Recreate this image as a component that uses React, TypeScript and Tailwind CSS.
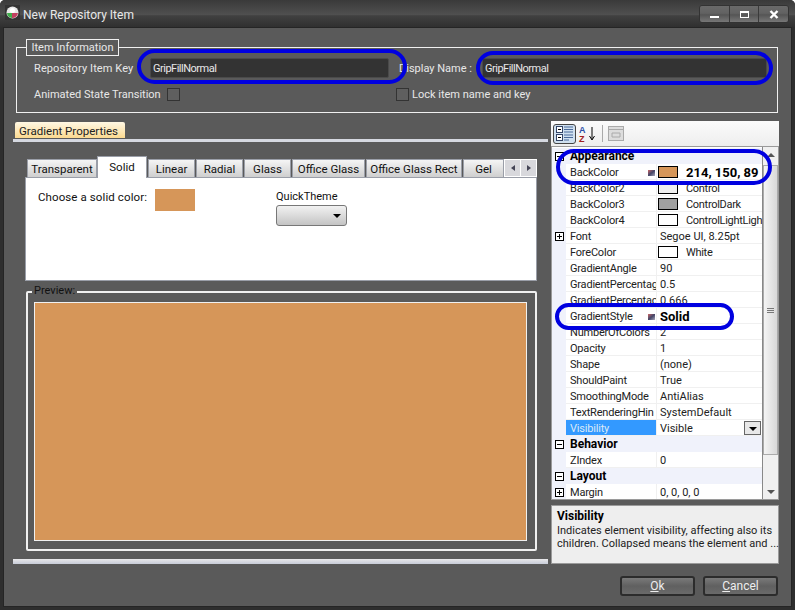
const font = "font-['Roboto','Liberation_Sans',sans-serif]";

type Row = {
  name: string;
  value?: string;
  swatch?: string;
  cat?: boolean;
  plus?: boolean;
  bold?: boolean;
  icon?: boolean;
};

const rows: Row[] = [
  { name: 'Appearance', cat: true },
  { name: 'BackColor', value: '214, 150, 89', swatch: 'bg-[#d69659]', bold: true, icon: true },
  { name: 'BackColor2', value: 'Control', swatch: 'bg-[#f0f0f0]' },
  { name: 'BackColor3', value: 'ControlDark', swatch: 'bg-[#a0a0a0]' },
  { name: 'BackColor4', value: 'ControlLightLigh', swatch: 'bg-white' },
  { name: 'Font', value: 'Segoe UI, 8.25pt', plus: true },
  { name: 'ForeColor', value: 'White', swatch: 'bg-white' },
  { name: 'GradientAngle', value: '90' },
  { name: 'GradientPercentag', value: '0.5' },
  { name: 'GradientPercentac', value: '0.666' },
  { name: 'GradientStyle', value: 'Solid', bold: true, icon: true },
  { name: 'NumberOfColors', value: '2' },
  { name: 'Opacity', value: '1' },
  { name: 'Shape', value: '(none)' },
  { name: 'ShouldPaint', value: 'True' },
  { name: 'SmoothingMode', value: 'AntiAlias' },
  { name: 'TextRenderingHin', value: 'SystemDefault' },
  { name: 'Visibility', value: 'Visible' },
  { name: 'Behavior', cat: true },
  { name: 'ZIndex', value: '0' },
  { name: 'Layout', cat: true },
  { name: 'Margin', value: '0, 0, 0, 0', plus: true },
];

const tabs = [
  { label: 'Transparent', w: 'w-[70px]' },
  { label: 'Solid', w: 'w-[50px]', active: true },
  { label: 'Linear', w: 'w-[47px]' },
  { label: 'Radial', w: 'w-[47px]' },
  { label: 'Glass', w: 'w-[47px]' },
  { label: 'Office Glass', w: 'w-[73px]' },
  { label: 'Office Glass Rect', w: 'w-[96px]' },
  { label: 'Gel', w: 'w-[41px]' },
];

function Expander({ plus }: { plus?: boolean }) {
  return (
    <span className="relative block h-[9px] w-[9px] border border-black bg-white">
      <span className="absolute left-[1px] top-[3px] h-[1px] w-[5px] bg-black" />
      {plus && <span className="absolute left-[3px] top-[1px] h-[5px] w-[1px] bg-black" />}
    </span>
  );
}

function GridRow({ row }: { row: Row }) {
  if (row.cat) {
    return (
      <div className="flex h-[16px] items-center bg-[#f0f2fb]">
        <div className="flex w-[14px] justify-center">
          <Expander />
        </div>
        <span className="pl-[4px] text-[12px] font-bold text-black">{row.name}</span>
      </div>
    );
  }
  const selected = row.name === 'Visibility';
  return (
    <div className="flex h-[16px] bg-white">
      <div className="flex w-[14px] items-center justify-center bg-[#f0f2fb]">
        {row.plus && <Expander plus />}
      </div>
      <div
        className={`flex w-[90px] items-center overflow-hidden whitespace-nowrap border-b border-[#f0f0f0] pl-[4px] pt-[2px] ${
          selected ? 'bg-[#3399ff] text-[#dbe9f7]' : 'text-[#222]'
        }`}
      >
        <span className="flex-1 overflow-hidden tracking-[-0.2px]">{row.name}</span>
        {row.icon && (
          <span className="mr-[1px] h-[6px] w-[7px] bg-gradient-to-br from-[#c66] via-[#446] to-[#aab]" />
        )}
      </div>
      <div className="relative flex w-[106px] items-center overflow-hidden whitespace-nowrap border-b border-l border-[#f0f0f0] pl-[3px] pt-[2px] text-[#222]">
        {row.swatch && (
          <span className={`-ml-[2px] -mt-[1px] mr-[8px] h-[12px] w-[20px] shrink-0 border border-black ${row.swatch}`} />
        )}
        <span className={row.bold ? 'text-[13px] font-bold text-black' : row.swatch ? 'tracking-[-0.3px]' : ''}>{row.value}</span>
        {selected && (
          <span className="absolute right-[1px] top-[1px] flex h-[14px] w-[17px] items-center justify-center border border-[#666] bg-[#e8e8e8]">
            <span className="mt-[2px] border-x-[4px] border-t-[4px] border-x-transparent border-t-black" />
          </span>
        )}
      </div>
    </div>
  );
}

function Field({ w, value }: { w: string; value: string }) {
  return (
    <div className={`flex h-[20px] items-center rounded-[2px] border border-[#4a4a4a] bg-[#333] pl-[2px] pt-[2px] tracking-[-0.5px] text-[#e8e8e8] ${w}`}>
      {value}
    </div>
  );
}

function WinButton({ children, w }: { children: React.ReactNode; w: string }) {
  return (
    <div className={`flex h-full items-center justify-center border-r border-[#3a3a3a] bg-[linear-gradient(#6a6a6a_0%,#626262_45%,#555_55%,#777_100%)] last:border-r-0 ${w}`}>
      {children}
    </div>
  );
}

function Button({ first, rest }: { first: string; rest: string }) {
  return (
    <div className="flex h-[20px] w-[75px] items-center justify-center rounded-[3px] border-2 border-[#2c2c2c] bg-gradient-to-b from-[#7a7a7a] via-[#606060] to-[#6a6a6a] text-[12px] text-[#eee]">
      <span>
        <span className="underline">{first}</span>
        {rest}
      </span>
    </div>
  );
}

export default function App() {
  return (
    <div className={`relative flex h-[610px] w-[795px] flex-col overflow-hidden rounded-t-[5px] bg-[#2e2e2e] text-[11px] leading-[14px] ${font}`}>
      {/* title bar */}
      <div className="flex h-[27px] shrink-0 items-start bg-[linear-gradient(#3a3a3a_0%,#505050_55%,#414141_58%,#303030_100%)] pl-[5px] pr-[6px] pt-[5px]">
        <svg width="15" height="15" viewBox="0 0 15 15" className="shrink-0">
          <rect width="15" height="15" fill="#333" />
          <circle cx="7.5" cy="7.5" r="6" fill="#e8e8e8" />
          <path d="M2 8a5.5 5.5 0 0 0 5 5V8z" fill="#3fae4a" />
          <path d="M13 8a5.5 5.5 0 0 1-6 5V8z" fill="#c04060" />
          <circle cx="7.5" cy="5.5" r="2.5" fill="#fff" />
        </svg>
        <span className="ml-[3px] mt-[3px] text-[12px] text-[#e8e8e8]">New Repository Item</span>
        <div className="ml-auto flex h-[18px] overflow-hidden rounded-[3px] border border-[#333]">
          <WinButton w="w-[30px]">
            <span className="mt-[6px] h-[2px] w-[9px] bg-white" />
          </WinButton>
          <WinButton w="w-[29px]">
            <span className="h-[7px] w-[9px] border border-t-2 border-white" />
          </WinButton>
          <WinButton w="w-[29px]">
            <svg width="10" height="9" viewBox="0 0 10 9">
              <path d="M1.5 1l7 7M8.5 1l-7 7" stroke="#fff" strokeWidth="2.4" />
            </svg>
          </WinButton>
        </div>
      </div>

      {/* client area */}
      <div className="mx-[3px] mb-[3px] flex min-h-0 flex-1 flex-col border border-[#252525] bg-[#5a5a5a] text-[#e8e8e8]">
        {/* Item Information */}
        <div className="relative ml-[12px] mt-[19px] h-[66px] w-[762px] shrink-0 border border-[#f0f0f0] pl-[17px] pt-[10px]">
          <div className="absolute left-[9px] top-[-9px] flex h-[17px] w-[93px] items-center justify-center border border-[#f0f0f0] bg-[#5a5a5a]">
            Item Information
          </div>
          <div className="flex h-[20px] items-center">
            <span className="mt-[2px] w-[116px] tracking-[0.1px]">Repository Item Key</span>
            <Field w="w-[239px]" value="GripFillNormal" />
            <span className="ml-[10px] mt-[2px] w-[83px]">Display Name :</span>
            <Field w="w-[285px]" value="GripFillNormal" />
          </div>
          <div className="mt-[9px] flex h-[14px] items-center">
            <span className="mt-[2px] w-[133px]">Animated State Transition</span>
            <span className="h-[13px] w-[13px] border border-[#333] bg-[#5f5f5f]" />
            <span className="ml-[216px] h-[13px] w-[13px] border border-[#333] bg-[#5f5f5f]" />
            <span className="ml-[3px] mt-[2px]">Lock item name and key</span>
          </div>
        </div>

        {/* main */}
        <div className="ml-[9px] mt-[8px] flex h-[443px] shrink-0">
          {/* left column */}
          <div className="flex w-[535px] flex-col pt-[1px]">
            <div className="ml-[2px] flex h-[17px] w-[110px] items-center justify-center rounded-t-[2px] bg-gradient-to-b from-[#fff8e4] to-[#fbd98f] pr-[3px] pt-[2px] text-[11.5px] text-[#222]">
              Gradient Properties
            </div>
            <div className="mt-[1px] h-[3px] bg-[#d5d8e0]" />

            <div className="ml-[12px] mt-[14px] w-[512px] text-[11.5px] text-[#111]">
              <div className="flex h-[21px] items-end">
                <div className="flex flex-1 items-end gap-[1px] pl-[2px]">
                  {tabs.map((t) =>
                    t.active ? (
                      <div
                        key={t.label}
                        className={`z-10 -mb-[1px] -ml-[1px] flex h-[22px] ${t.w} items-start justify-center border-x border-t border-[#9a9ea8] bg-white pt-[3px]`}
                      >
                        {t.label}
                      </div>
                    ) : (
                      <div
                        key={t.label}
                        className={`flex h-[18px] shrink-0 ${t.w} items-center justify-center border-x border-t border-[#9a9ea8] bg-gradient-to-b from-[#f5f5f5] to-[#cfcfcf]`}
                      >
                        {t.label}
                      </div>
                    ),
                  )}
                </div>
              </div>
              <div className="relative h-[104px] border border-[#9a9ea8] bg-white">
                <div className="absolute right-[-1px] top-[-19px] flex h-[18px] w-[33px] border border-white bg-[#d8d8dc]">
                  <span className="flex flex-1 items-center justify-center border-r border-white">
                    <span className="border-y-[3px] border-r-[4px] border-y-transparent border-r-[#445]" />
                  </span>
                  <span className="flex flex-1 items-center justify-center">
                    <span className="border-y-[3px] border-l-[4px] border-y-transparent border-l-[#445]" />
                  </span>
                </div>
                <div className="flex pl-[12px] pt-[11px]">
                  <span className="mt-[1px] w-[117px] tracking-[0.1px]">Choose a solid color:</span>
                  <span className="h-[22px] w-[40px] bg-[#d69659]" />
                  <div className="ml-[81px] flex flex-col text-[11px]">
                    <span className="pt-[1px]">QuickTheme</span>
                    <div className="mt-[1px] flex h-[21px] w-[71px] items-center justify-end rounded-[3px] border border-[#777] bg-gradient-to-b from-[#f2f2f2] to-[#c4c4c4] pr-[5px]">
                      <span className="border-x-[4px] border-t-[4px] border-x-transparent border-t-black" />
                    </div>
                  </div>
                </div>
              </div>
            </div>

            {/* preview */}
            <div className="relative ml-[13px] mt-[10px] h-[260px] w-[511px] shrink-0 rounded-[2px] border-2 border-[#f0f0f0] pb-[8px] pl-[6px] pr-[8px] pt-[9px]">
              <span className="absolute left-[4px] top-[-9px] bg-[#5a5a5a] px-[2px] text-[#111]">Preview:</span>
              <div className="h-full w-full border border-[#f0f0f0] bg-[#d69659]" />
            </div>

            <div className="mt-[8px] h-[5px] bg-gradient-to-b from-[#e8e8ea] to-[#c8ccd8]" />
          </div>

          {/* property grid */}
          <div className="ml-[3px] flex w-[228px] flex-col text-[#222]">
            <div className="flex h-[26px] shrink-0 items-center border-b border-[#9a9a9a] bg-gradient-to-b from-[#fbfbfb] to-[#eeeeee] pl-[2px]">
              <div className="flex h-[20px] w-[23px] items-center justify-center rounded-[3px] border border-[#444] bg-[#cfe0f0]">
                <svg width="18" height="15" viewBox="0 0 18 15">
                  <rect x="0.5" y="0.5" width="6" height="6" fill="#fff" stroke="#346" />
                  <rect x="0.5" y="8.5" width="6" height="6" fill="#fff" stroke="#346" />
                  <path d="M2 3.5h3M2 11.5h3" stroke="#000" />
                  <path d="M8 1h9M8 3.5h9M8 6h9M8 9h9M8 11.5h9M8 14h5" stroke="#4a6a9a" />
                </svg>
              </div>
              <svg width="20" height="18" viewBox="0 0 20 18" className="ml-[2px]">
                <text x="1" y="8" fontSize="9" fontWeight="700" fill="#2a4fa8" fontFamily="Liberation Sans">A</text>
                <text x="1" y="17" fontSize="9" fontWeight="700" fill="#a02020" fontFamily="Liberation Sans">Z</text>
                <path d="M14 2v12M11.5 11l2.5 4 2.5-4" stroke="#000" fill="none" />
              </svg>
              <span className="ml-[4px] h-[17px] w-[1px] bg-[#aaa]" />
              <svg width="16" height="15" viewBox="0 0 16 15" className="ml-[5px]">
                <rect x="0.5" y="0.5" width="15" height="14" fill="#ddd" stroke="#aaa" />
                <path d="M1 3.5h14M4 7h8v4H4z" stroke="#aaa" fill="none" />
              </svg>
            </div>
            <div className="relative flex h-[353px] shrink-0 border-x border-b border-[#9a9a9a] bg-white">
              <div className="w-[210px] overflow-hidden pt-[1px]">
                {rows.map((r) => (
                  <GridRow key={r.name} row={r} />
                ))}
              </div>
              <div className="flex flex-1 flex-col items-center border-l border-[#888] bg-[#f0f0f0]">
                <span className="mt-[6px] border-x-[4px] border-b-[4px] border-x-transparent border-b-[#555]" />
                <div className="mt-[8px] flex h-[290px] w-[15px] items-center justify-center border border-[#aaa] bg-gradient-to-r from-[#f4f4f4] to-[#d8d8d8]">
                  <span className="flex flex-col gap-[1px]">
                    <span className="h-[1px] w-[7px] bg-[#777]" />
                    <span className="h-[1px] w-[7px] bg-[#777]" />
                    <span className="h-[1px] w-[7px] bg-[#777]" />
                  </span>
                </div>
                <span className="mt-auto mb-[5px] border-x-[4px] border-t-[4px] border-x-transparent border-t-[#555]" />
              </div>
            </div>
            <div className="mt-[5px] flex-1 whitespace-nowrap border border-[#9a9a9a] bg-[#eeeeee] px-[5px] pt-[2px] text-[#222]">
              <div className="text-[12px] font-bold leading-[16px] text-black">Visibility</div>
              <div className="leading-[13px]">
                Indicates element visibility, affecting also its
                <br />
                children. Collapsed means the element and ...
              </div>
            </div>
          </div>
        </div>

        {/* footer */}
        <div className="mr-[13px] mt-[12px] flex justify-end gap-[8px]">
          <Button first="O" rest="k" />
          <Button first="C" rest="ancel" />
        </div>
      </div>

      {/* annotations drawn on the screenshot */}
      <div className="pointer-events-none absolute left-[137px] top-[49px] h-[35px] w-[270px] rounded-full border-4 border-[#0000e0]" />
      <div className="pointer-events-none absolute left-[476px] top-[51px] h-[34px] w-[297px] rounded-full border-4 border-[#0000e0]" />
      <div className="pointer-events-none absolute left-[556px] top-[149px] h-[36px] w-[216px] rounded-full border-4 border-[#0000e0]" />
      <div className="pointer-events-none absolute left-[555px] top-[303px] h-[27px] w-[179px] rounded-full border-4 border-[#0000e0]" />
    </div>
  );
}
